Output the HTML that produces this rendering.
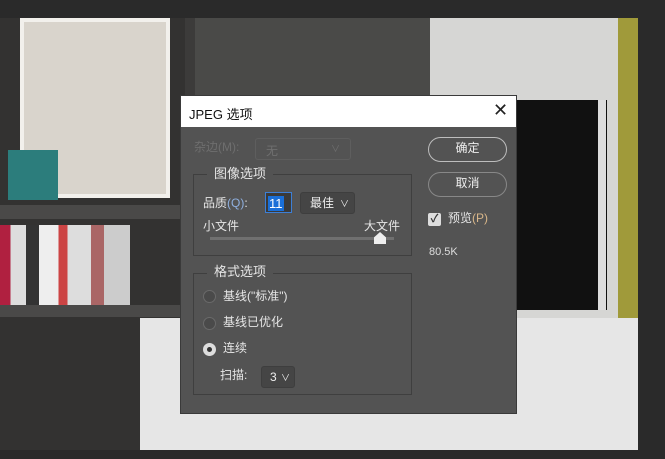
<!DOCTYPE html>
<html><head><meta charset="utf-8"><style>
*{margin:0;padding:0;box-sizing:border-box}
body{width:665px;height:459px;background:#2a2a2a;position:relative;overflow:hidden;font-family:"Liberation Sans","Noto Sans CJK SC",sans-serif}
.a{position:absolute}
.dlg{left:180px;top:95px;width:337px;height:319px;background:#535353;border:1px solid #3a3a3a}
.t{color:#e6e6e6;font-size:12px;line-height:15px}
.grp{border:1px solid #3f3f3f}
.lg{background:#535353;padding:0 7px;font-size:13px}
.btn{border:1.5px solid #bdbdbd;border-radius:13px;color:#eee;font-size:12px;text-align:center;line-height:21px}
.sel{background:#454545;border:1px solid #3e3e3e;border-radius:3px;color:#eee;font-size:12px;line-height:16px}
.rd{width:13px;height:13px;border-radius:50%;border:1.5px solid #6a6a6a;background:#4a4a4a}
</style></head><body>
<div class="a" style="left:0;top:18px;width:638px;height:432px;background:#3c3b3a"></div>
<div class="a" style="left:0;top:18px;width:185px;height:432px;background:#333231"></div>
<div class="a" style="left:20px;top:18px;width:150px;height:180px;background:#d9d4cc;border:4px solid #f2f0ec"></div>
<div class="a" style="left:8px;top:150px;width:50px;height:50px;background:#2c7d7c"></div>
<div class="a" style="left:0;top:205px;width:180px;height:14px;background:#4a4948"></div>
<div class="a" style="left:0;top:225px;width:130px;height:80px;background:linear-gradient(90deg,#b02040 0 8%,#ddd 8% 20%,#333 20% 30%,#eee 30% 45%,#c44 45% 52%,#ddd 52% 70%,#a66 70% 80%,#ccc 80% 100%)"></div>
<div class="a" style="left:0;top:305px;width:180px;height:12px;background:#4a4948"></div>
<div class="a" style="left:195px;top:18px;width:235px;height:77px;background:#4a4a48"></div>
<div class="a" style="left:430px;top:18px;width:190px;height:300px;background:#d6d6d4"></div>
<div class="a" style="left:618px;top:18px;width:20px;height:432px;background:#a09a3a"></div>
<div class="a" style="left:517px;top:100px;width:90px;height:210px;background:#111"></div>
<div class="a" style="left:598px;top:100px;width:8px;height:210px;background:#ddd"></div>
<div class="a" style="left:140px;top:318px;width:498px;height:132px;background:#e6e6e6"></div>
<div class="a" style="left:0;top:450px;width:665px;height:9px;background:#2a2a2a"></div>
<div class="a" style="left:638px;top:0;width:27px;height:459px;background:#2a2a2a"></div>
<div class="a" style="left:0;top:0;width:665px;height:18px;background:#2a2a2a"></div>

<div class="a dlg">
 <div class="a" style="left:0;top:0;width:335px;height:31px;background:#fff"></div>
 <div class="a" style="left:8px;top:8px;font-size:13px;color:#111">JPEG 选项</div>
 <div class="a" style="left:312px;top:4px;font-size:18px;color:#222">✕</div>
 <div class="a t" style="left:13px;top:44px;color:#6e6e6e">杂边(M):</div>
 <div class="a" style="left:74px;top:42px;width:96px;height:22px;border:1px solid #5e5e5e;border-radius:3px;color:#707070;font-size:12px;padding:3px 10px">无<span style="float:right;font-size:9px">∨</span></div>
 <div class="a grp" style="left:12px;top:78px;width:219px;height:82px"></div>
 <div class="a t lg" style="left:26px;top:70px">图像选项</div>
 <div class="a t" style="left:22px;top:100px">品质<span style="color:#8fb0e0">(Q)</span>:</div>
 <div class="a" style="left:84px;top:96px;width:27px;height:21px;border:1px solid #3d7fd6;background:#3a3a3a;padding:2px"><span style="background:#1a6fd8;color:#fff;font-size:13px;line-height:15px;display:inline-block;padding:0 1px">11</span></div>
 <div class="a sel" style="left:119px;top:96px;width:55px;height:22px;padding:2px 9px">最佳<span style="float:right;font-size:9px;margin-right:-4px;margin-top:1px">∨</span></div>
 <div class="a t" style="left:22px;top:123px">小文件</div>
 <div class="a t" style="left:183px;top:123px">大文件</div>
 <div class="a" style="left:29px;top:141px;width:184px;height:3px;background:#707070"></div>
 <div class="a" style="left:193px;top:136px;width:12px;height:12px;background:#eee;clip-path:polygon(50% 0,100% 45%,100% 100%,0 100%,0 45%)"></div>
 <div class="a grp" style="left:12px;top:177px;width:219px;height:122px"></div>
 <div class="a t lg" style="left:26px;top:168px">格式选项</div>
 <div class="a rd" style="left:22px;top:194px"></div>
 <div class="a t" style="left:42px;top:193px">基线("标准")</div>
 <div class="a rd" style="left:22px;top:221px"></div>
 <div class="a t" style="left:42px;top:219px">基线已优化</div>
 <div class="a rd" style="left:22px;top:247px;background:#ddd;border-color:#ddd"><div style="width:5px;height:5px;background:#333;border-radius:50%;margin:2.5px"></div></div>
 <div class="a t" style="left:42px;top:245px">连续</div>
 <div class="a t" style="left:39px;top:272px">扫描:</div>
 <div class="a sel" style="left:80px;top:270px;width:34px;height:22px;padding:2px 8px">3<span style="float:right;font-size:9px;margin-right:-4px;margin-top:1px">∨</span></div>
 <div class="a btn" style="left:247px;top:41px;width:79px;height:25px">确定</div>
 <div class="a btn" style="left:247px;top:76px;width:79px;height:25px;border-color:#888">取消</div>
 <div class="a" style="left:247px;top:117px;width:13px;height:13px;background:#ddd;border-radius:2px;color:#333;font-size:11px;line-height:13px;text-align:center;font-weight:bold">✓</div>
 <div class="a t" style="left:267px;top:115px">预览<span style="color:#d9b78a">(P)</span></div>
 <div class="a" style="left:248px;top:150px;color:#ddd;font-size:11px">80.5K</div>
</div>
</body></html>
